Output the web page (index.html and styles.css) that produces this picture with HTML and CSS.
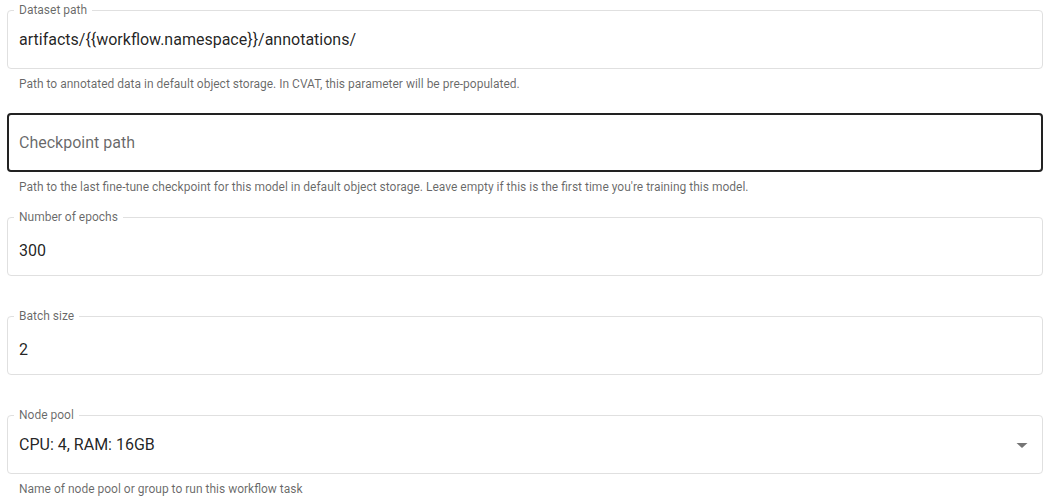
FILE: index.html
```html
<!DOCTYPE html>
<html lang="en">
<head>
<meta charset="utf-8">
<title>Workflow parameters</title>
<link rel="stylesheet" href="styles.css">
</head>
<body>
<main class="form">
  <div class="field">
    <div class="box">
      <span class="label">Dataset path</span>
      <span class="value">artifacts/{{workflow.namespace}}/annotations/</span>
    </div>
    <p class="helper">Path to annotated data in default object storage. In CVAT, this parameter will be pre-populated.</p>
  </div>
  <div class="field field-focused">
    <div class="box focused">
      <span class="placeholder">Checkpoint path</span>
    </div>
    <p class="helper">Path to the last fine-tune checkpoint for this model in default object storage. Leave empty if this is the first time you're training this model.</p>
  </div>
  <div class="field no-helper">
    <div class="box">
      <span class="label">Number of epochs</span>
      <span class="value numeric">300</span>
    </div>
  </div>
  <div class="field no-helper">
    <div class="box">
      <span class="label">Batch size</span>
      <span class="value numeric">2</span>
    </div>
  </div>
  <div class="field">
    <div class="box select">
      <span class="label">Node pool</span>
      <span class="value">CPU: 4, RAM: 16GB</span>
      <svg class="arrow" width="24" height="24" viewBox="0 0 24 24" aria-hidden="true"><path d="M6.5 10l5.5 5 5.5-5z"/></svg>
    </div>
    <p class="helper">Name of node pool or group to run this workflow task</p>
  </div>
</main>
</body>
</html>
```
FILE: styles.css
```css
html, body {
  margin: 0;
  background: #fff;
}

body {
  font-family: Roboto, "Liberation Sans", Arial, sans-serif;
  color: rgba(0, 0, 0, 0.87);
}

.form {
  display: flex;
  flex-direction: column;
  padding: 10px 9px 0 7px;
}

.field {
  display: flex;
  flex-direction: column;
  margin-bottom: 18px;
}

.field.field-focused {
  margin-bottom: 19px;
}

.field.no-helper {
  margin-bottom: 40px;
}

.box {
  position: relative;
  height: 59px;
  box-sizing: border-box;
  border: 1px solid #e0e0e0;
  border-radius: 4px;
  display: flex;
  align-items: center;
  padding: 0 12px 0 11px;
}

.box.focused {
  border: 2px solid #222;
  padding-left: 10px;
}

.label {
  position: absolute;
  top: -9px;
  left: 6px;
  padding: 0 5px;
  background: #fff;
  font-size: 12px;
  line-height: 16px;
  color: rgba(0, 0, 0, 0.6);
  white-space: nowrap;
}

.value {
  font-size: 16px;
  line-height: 20px;
  color: rgba(0, 0, 0, 0.87);
}

.value.numeric {
  margin-top: 9px;
}

.placeholder {
  font-size: 16px;
  line-height: 20px;
  color: rgba(0, 0, 0, 0.6);
}

.select {
  justify-content: space-between;
  padding-right: 8px;
}

.arrow {
  fill: rgba(0, 0, 0, 0.54);
}

.helper {
  margin: 4px 0 0 12px;
  font-size: 12px;
  line-height: 22px;
  color: rgba(0, 0, 0, 0.6);
}
```
